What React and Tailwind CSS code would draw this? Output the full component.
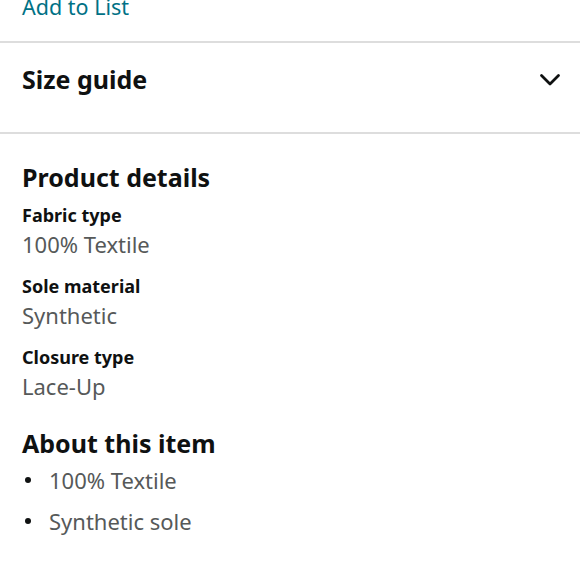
const details = [
  { label: "Fabric type", value: "100% Textile" },
  { label: "Sole material", value: "Synthetic" },
  { label: "Closure type", value: "Lace-Up" },
];

const bullets = ["100% Textile", "Synthetic sole"];

export default function App() {
  return (
    <div className="w-[580px] h-[580px] overflow-hidden bg-white font-['Noto_Sans',sans-serif] text-[#0f1111]">
      {/* Add to list link (cut off at top) */}
      <div className="px-[22px] h-[41px] flex items-start">
        <a className="-mt-[8px] text-[21.5px] leading-[30px] text-[#007185]">Add to List</a>
      </div>
      <div className="h-[2px] bg-[#dddddd]" />

      {/* Size guide */}
      <div className="h-[89px] pl-[22px] pr-[19px] pt-[20px] flex items-start justify-between">
        <h2 className="text-[25px] font-bold leading-[32px]">Size guide</h2>
        <svg width="22" height="14" viewBox="0 0 22 14" className="mt-[10px]">
          <path d="M2.5 2.5 L11 11 L19.5 2.5" fill="none" stroke="#0f1111" strokeWidth="2.8" strokeLinecap="round" strokeLinejoin="round" />
        </svg>
      </div>
      <div className="h-[2px] bg-[#dddddd]" />

      {/* Product details */}
      <div className="px-[22px] pt-[26px]">
        <h2 className="text-[25px] font-bold leading-[34px]">Product details</h2>
        <div className="flex flex-col gap-[14px] mt-[8px]">
          {details.map((d) => (
            <div key={d.label}>
              <p className="text-[18px] font-bold leading-[26px]">{d.label}</p>
              <p className="mt-[1px] text-[22px] leading-[30px] text-[#565959]">{d.value}</p>
            </div>
          ))}
        </div>

        {/* About this item */}
        <h2 className="text-[25px] font-bold leading-[34px] mt-[25px]">About this item</h2>
        <ul className="mt-[5px] flex flex-col gap-[11px]">
          {bullets.map((b) => (
            <li key={b} className="flex items-center text-[22px] leading-[30px] text-[#565959]">
              <span className="ml-[3px] mr-[18px] w-[6px] h-[6px] rounded-full bg-[#0f1111]" />
              {b}
            </li>
          ))}
        </ul>
      </div>
    </div>
  );
}
